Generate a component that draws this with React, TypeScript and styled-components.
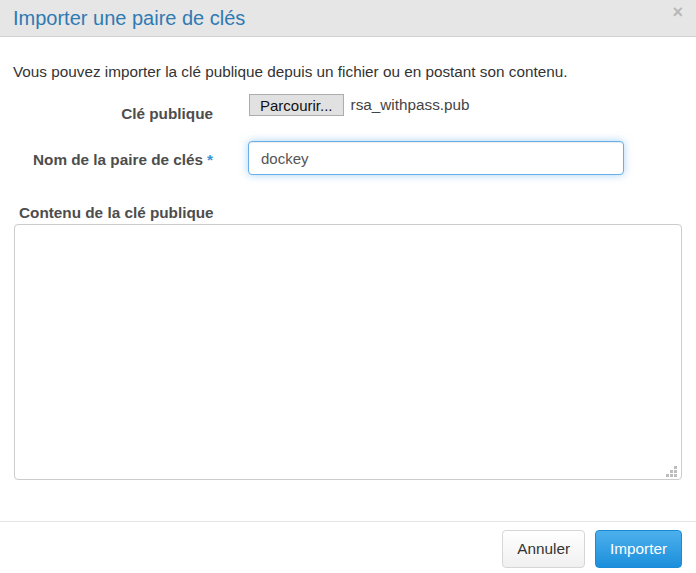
import styled, { createGlobalStyle } from "styled-components";

const GlobalStyle = createGlobalStyle`
  html, body {
    margin: 0;
    padding: 0;
    background: #ffffff;
  }
  body {
    font-family: "Liberation Sans", Arial, Helvetica, sans-serif;
    font-size: 15.3px;
    color: #333;
  }
`;

const Modal = styled.div`
  display: flex;
  flex-direction: column;
  width: 696px;
  height: 573px;
  background: #fff;
`;

const Header = styled.div`
  display: flex;
  align-items: center;
  justify-content: space-between;
  height: 36px;
  padding: 0 13px 0 13px;
  background: #e6e6e6;
  border-bottom: 1px solid #d0d0d0;
`;

const Title = styled.h4`
  margin: 0;
  font-size: 20px;
  font-weight: normal;
  color: #2f7ab3;
`;

const Close = styled.span`
  align-self: flex-start;
  margin-top: 2px;
  font-size: 18px;
  font-weight: bold;
  color: #b8b8b8;
  line-height: 20px;
`;

const Body = styled.div`
  flex: 1;
  display: flex;
  flex-direction: column;
  padding: 25px 14px 0 13px;
`;

const Intro = styled.p`
  margin: 0 0 12px;
  line-height: 20px;
  color: #333;
`;

const FormRow = styled.div<{ $top?: number }>`
  display: grid;
  grid-template-columns: 200px 375px;
  column-gap: 35px;
  align-items: start;
  margin-top: ${(p) => p.$top ?? 0}px;
`;

const Label = styled.label<{ $pad: number }>`
  justify-self: end;
  padding-top: ${(p) => p.$pad}px;
  font-weight: bold;
  color: #4d4d4d;
  line-height: 20px;
`;

const Required = styled.span`
  color: #3c93d4;
  margin-left: 4px;
`;

const FileControl = styled.div`
  display: flex;
  align-items: center;
  gap: 7px;
`;

const BrowseButton = styled.button`
  height: 22px;
  padding: 0 10px;
  margin-left: 1px;
  font-family: inherit;
  font-size: 15px;
  color: #111;
  background: #e1e1e1;
  border: 1px solid #adadad;
  border-radius: 0;
`;

const FileName = styled.span`
  color: #444;
`;

const TextInput = styled.input`
  box-sizing: border-box;
  width: 376px;
  height: 34px;
  padding: 6px 12px;
  font-family: inherit;
  font-size: 15px;
  color: #555;
  border: 1px solid #66afe9;
  border-radius: 4px;
  box-shadow: inset 0 1px 1px rgba(0, 0, 0, 0.075),
    0 0 8px rgba(102, 175, 233, 0.55);
  outline: none;
`;

const AreaLabel = styled.label`
  display: block;
  margin: 28px 0 1px 6px;
  font-weight: bold;
  color: #4d4d4d;
  line-height: 20px;
`;

const AreaWrap = styled.div`
  position: relative;
  width: 668px;
  height: 256px;
  margin-left: 1px;
`;

const TextArea = styled.textarea`
  box-sizing: border-box;
  display: block;
  width: 100%;
  height: 100%;
  padding: 6px 12px;
  font-family: inherit;
  font-size: 15px;
  border: 1px solid #ccc;
  border-radius: 4px;
  resize: none;
  outline: none;
`;

const Grip = styled.svg`
  position: absolute;
  right: 5px;
  bottom: 3px;
  pointer-events: none;
`;

const Footer = styled.div`
  display: flex;
  justify-content: flex-end;
  gap: 10px;
  padding: 8px 14px 5px;
  border-top: 1px solid #e5e5e5;
`;

const Button = styled.button<{ $primary?: boolean }>`
  height: 38px;
  padding: 0 14px;
  font-family: inherit;
  font-size: 15.3px;
  border-radius: 4px;
  color: ${(p) => (p.$primary ? "#fff" : "#333")};
  background: ${(p) =>
    p.$primary
      ? "linear-gradient(to bottom, #4db0ec 0%, #1b8fdc 100%)"
      : "linear-gradient(to bottom, #ffffff 0%, #f0f0f0 100%)"};
  border: 1px solid ${(p) => (p.$primary ? "#1a8ad6" : "#d6d6d6")};
`;

const gripDots = [
  [8, 0],
  [4, 4],
  [8, 4],
  [0, 8],
  [4, 8],
  [8, 8],
];

export default function App() {
  return (
    <>
      <GlobalStyle />
      <Modal>
        <Header>
          <Title>Importer une paire de clés</Title>
          <Close>×</Close>
        </Header>
        <Body>
          <Intro>
            Vous pouvez importer la clé publique depuis un fichier ou en postant
            son contenu.
          </Intro>
          <FormRow>
            <Label $pad={10}>Clé publique</Label>
            <FileControl>
              <BrowseButton>Parcourir...</BrowseButton>
              <FileName>rsa_withpass.pub</FileName>
            </FileControl>
          </FormRow>
          <FormRow $top={17}>
            <Label $pad={9}>
              Nom de la paire de clés<Required>*</Required>
            </Label>
            <TextInput defaultValue="dockey" />
          </FormRow>
          <AreaLabel>Contenu de la clé publique</AreaLabel>
          <AreaWrap>
            <TextArea />
            <Grip width="11" height="11" viewBox="0 0 11 11">
              {gripDots.map(([x, y]) => (
                <rect key={`${x}-${y}`} x={x} y={y} width="3" height="3" fill="#bdbdbd" />
              ))}
            </Grip>
          </AreaWrap>
        </Body>
        <Footer>
          <Button>Annuler</Button>
          <Button $primary>Importer</Button>
        </Footer>
      </Modal>
    </>
  );
}
